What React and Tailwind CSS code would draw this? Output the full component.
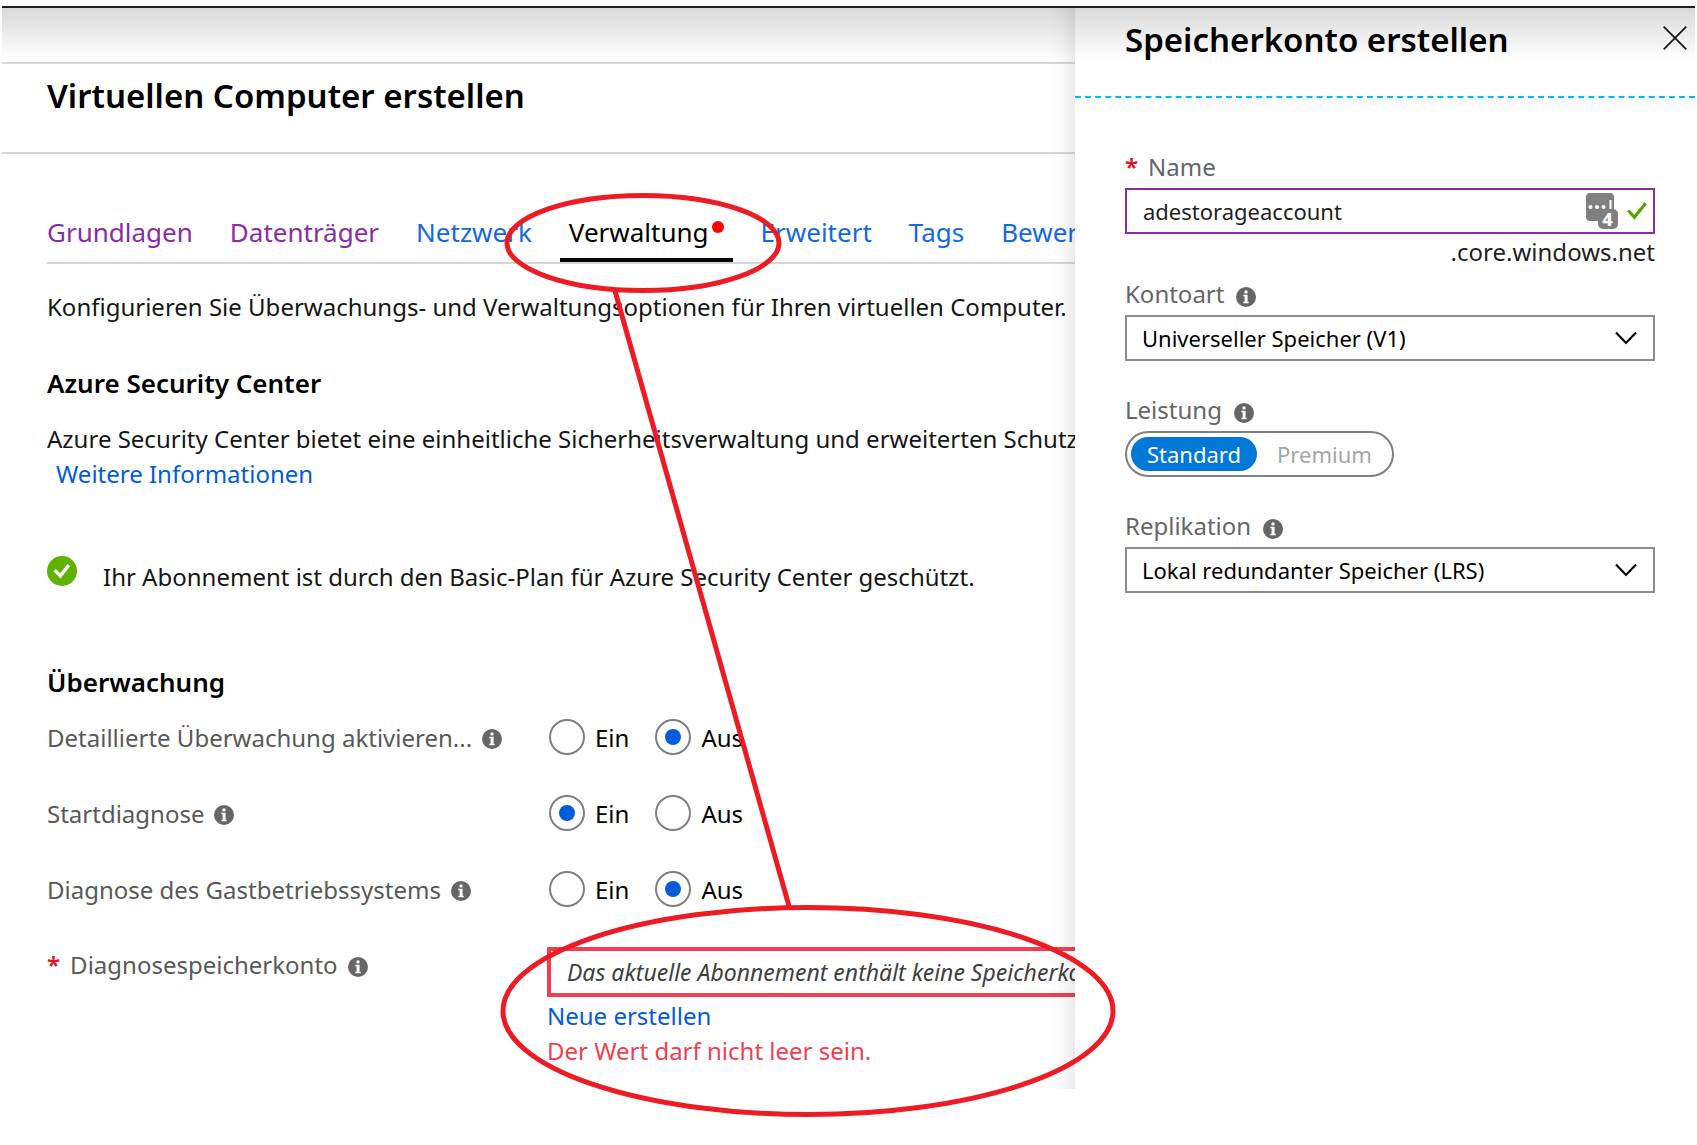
import { useId, useState } from "react";

const BODY = "text-[24px] leading-[35px]";

function InfoIcon() {
  return (
    <svg viewBox="0 0 20 20" className="size-5 shrink-0" aria-hidden="true">
      <circle cx="10" cy="10" r="10" fill="#666" />
      <circle cx="10" cy="4.9" r="1.7" fill="#fff" />
      <path d="M7.3 7.8h4.3v7h1.1v1.5H7.3v-1.5h1.3V9.3H7.3z" fill="#fff" />
    </svg>
  );
}

function Chevron() {
  return (
    <svg viewBox="0 0 22 14" className="pointer-events-none absolute right-[18px] top-4 h-3.5 w-[22px]" aria-hidden="true">
      <path d="M1 1.5 11 12 21 1.5" fill="none" stroke="#000" strokeWidth="2.2" />
    </svg>
  );
}

function Radio({ name, label, checked, onChange }) {
  return (
    <label className="flex items-center gap-2.5 text-black">
      <input
        type="radio"
        name={name}
        checked={checked}
        onChange={onChange}
        className="grid size-9 appearance-none place-items-center rounded-full border-2 border-[#808080] bg-white before:size-4 before:rounded-full checked:before:bg-[#015cda]"
      />
      {label}
    </label>
  );
}

function OptionRow({ label, initial }) {
  const name = useId();
  const [value, setValue] = useState(initial);
  return (
    <fieldset className="flex h-[35px] items-center">
      <div className="flex w-[500px] shrink-0 items-center gap-2.5 text-[#595959]">
        <legend className="contents">{label}</legend>
        <span className="pt-1"><InfoIcon /></span>
      </div>
      <div className="flex gap-[26px] pl-0.5">
        <Radio name={name} label="Ein" checked={value === "Ein"} onChange={() => setValue("Ein")} />
        <Radio name={name} label="Aus" checked={value === "Aus"} onChange={() => setValue("Aus")} />
      </div>
    </fieldset>
  );
}

const TABS = [
  ["Grundlagen", "text-[#8a2da5]"],
  ["Datenträger", "text-[#8a2da5]"],
  ["Netzwerk", "text-[#1569e0]"],
  ["Verwaltung", "text-black"],
  ["Erweitert", "text-[#1569e0]"],
  ["Tags", "text-[#1569e0]"],
  ["Bewertung", "text-[#1569e0]"],
];

function Tabs() {
  return (
    <div role="tablist" className="flex gap-[19px] border-b-2 border-[#d6d6d6]">
      {TABS.map(([label, color], i) => {
        const active = label === "Verwaltung";
        return (
          <button
            key={label}
            role="tab"
            aria-selected={active}
            className={`flex border-b-4 px-[9px] pb-2 text-[26px] leading-9 ${i === 0 ? "pl-0" : ""} ${active ? "border-black" : "border-transparent"} ${color}`}
          >
            {label}
            {active && <span className="mt-[7px] ml-[3px] size-3 rounded-full bg-[#fe0000]" />}
          </button>
        );
      })}
    </div>
  );
}

function CreateVm() {
  return (
    <main className="min-w-0 overflow-hidden whitespace-nowrap pt-[54px] pb-[21px]">
      <header className="border-y-2 border-[#d6d6d6] pt-2.5 pb-[34px] pl-[45px]">
        <h1 className="text-[33px] leading-[44px] font-semibold text-black">Virtuellen Computer erstellen</h1>
      </header>
      <div className={`pt-[60px] pl-[45px] text-[#161616] ${BODY}`}>
        <Tabs />
        <p className="mt-[25px]">Konfigurieren Sie Überwachungs- und Verwaltungsoptionen für Ihren virtuellen Computer.</p>

        <h2 className="mt-[42px] text-[26px] font-semibold text-black">Azure Security Center</h2>
        <p className="mt-5">Azure Security Center bietet eine einheitliche Sicherheitsverwaltung und erweiterten Schutz</p>
        <a href="#info" className="ml-[9px] block w-fit text-[#015cda]">Weitere Informationen</a>

        <div className="mt-[65px] flex items-start gap-[26px]">
          <svg viewBox="0 0 30 30" className="size-[30px]" aria-hidden="true">
            <circle cx="15" cy="15" r="15" fill="#5db300" />
            <path d="m6.5 15.3 2.3-2.3 4.4 4.3 7.3-9.2 2.6 2.1-9.6 12.2z" fill="#fff" />
          </svg>
          <p className="pt-[3px]">Ihr Abonnement ist durch den Basic-Plan für Azure Security Center geschützt.</p>
        </div>

        <h2 className="mt-[71px] text-[26px] font-semibold text-black">Überwachung</h2>
        <form className="mt-[19px] flex flex-col gap-[41px]">
          <OptionRow label="Detaillierte Überwachung aktivieren..." initial="Aus" />
          <OptionRow label="Startdiagnose" initial="Ein" />
          <OptionRow label="Diagnose des Gastbetriebssystems" initial="Aus" />
          <div className="flex items-start">
            <div className="flex w-[500px] shrink-0 items-center gap-2.5 text-[#595959]">
              <label htmlFor="diag">
                <span className="mr-2.5 font-semibold text-[#e81123]">*</span>Diagnosespeicherkonto
              </label>
              <span className="pt-1"><InfoIcon /></span>
            </div>
            <div className="shrink-0">
              <select
                id="diag"
                className="block h-[50px] w-[700px] appearance-none border-4 border-[#f04050] bg-white pl-4 text-[23px] text-[#404040] italic"
              >
                <option>Das aktuelle Abonnement enthält keine Speicherkonten.</option>
              </select>
              <a href="#new" className="mt-px block w-fit text-[#015cda]">Neue erstellen</a>
              <p className="text-[#f04050]">Der Wert darf nicht leer sein.</p>
            </div>
          </div>
        </form>
      </div>
    </main>
  );
}

function PanelLabel({ htmlFor, children, required }) {
  return (
    <div className="flex h-[39px] items-start gap-3 text-[#666]">
      <label htmlFor={htmlFor}>
        {required && <span className="mr-2.5 font-semibold text-[#e81123]">*</span>}
        {children}
      </label>
      {!required && <span className="pt-[11px]"><InfoIcon /></span>}
    </div>
  );
}

function PanelSelect({ id, label, value }) {
  return (
    <div>
      <PanelLabel htmlFor={id}>{label}</PanelLabel>
      <div className="relative">
        <select id={id} className="block h-[46px] w-full appearance-none border-2 border-[#8c8c8c] bg-white pl-[15px] text-[22px] text-black">
          <option>{value}</option>
        </select>
        <Chevron />
      </div>
    </div>
  );
}

function StoragePanel() {
  const [tier, setTier] = useState("Standard");
  return (
    <aside className="relative before:absolute before:inset-y-0 before:-left-[26px] before:w-[26px] before:bg-linear-to-r before:from-transparent before:via-black/2 before:to-black/8">
      <header className="flex items-start justify-between border-b-2 border-dashed border-[#00bcf2] pt-2.5 pr-2 pb-[34px] pl-[50px]">
        <h2 className="text-[33px] leading-[44px] font-semibold text-black">Speicherkonto erstellen</h2>
        <button aria-label="Schließen" className="mt-2">
          <svg viewBox="0 0 24 24" className="size-6" aria-hidden="true">
            <path d="M.7.7l22.6 22.6M23.3.7.7 23.3" stroke="#1a1a1a" strokeWidth="1.8" />
          </svg>
        </button>
      </header>
      <form className={`pt-[51px] pr-10 pl-[50px] ${BODY}`}>
        <PanelLabel htmlFor="name" required>Name</PanelLabel>
        <div className="flex h-[46px] items-center border-2 border-[#8a2da5] pr-1.5 pl-4">
          <input id="name" defaultValue="adestorageaccount" className="min-w-0 flex-1 text-[22px] leading-8 text-[#1f1f1f] outline-none" />
          <svg viewBox="0 0 32 36" className="mr-[9px] h-9 w-8 overflow-visible" aria-hidden="true">
            <rect width="28" height="28" rx="4" fill="#808080" />
            <rect x="12" y="16" width="20" height="20" rx="5" fill="#808080" />
            <circle cx="4.5" cy="14" r="2" fill="#fff" />
            <circle cx="11" cy="14" r="2" fill="#fff" />
            <circle cx="17.5" cy="14" r="2" fill="#fff" />
            <path d="M24.5 7v9" stroke="#fff" strokeWidth="2" />
            <text x="21.5" y="32.5" textAnchor="middle" fontSize="18" fontWeight="800" fill="#fff">4</text>
          </svg>
          <svg viewBox="0 0 20 18" className="h-[18px] w-5" aria-hidden="true">
            <path d="m1.2 8.5 6.3 6.8L18.6 1.2" fill="none" stroke="#57a300" strokeWidth="3.2" />
          </svg>
        </div>
        <p className="text-right text-[#1f1f1f]">.core.windows.net</p>
        <div className="mt-[7px] flex flex-col gap-[31px]">
          <PanelSelect id="kind" label="Kontoart" value="Universeller Speicher (V1)" />
          <div>
            <PanelLabel>Leistung</PanelLabel>
            <div className="flex h-[46px] w-fit items-center gap-1 rounded-full border-2 border-[#808080] px-1 text-[22px]">
              {["Standard", "Premium"].map((t) => (
                <button
                  type="button"
                  key={t}
                  aria-pressed={tier === t}
                  onClick={() => setTier(t)}
                  className={`h-[34px] rounded-full px-4 leading-[34px] ${tier === t ? "bg-[#0078d7] text-white" : "text-[#a6a6a6]"}`}
                >
                  {t}
                </button>
              ))}
            </div>
          </div>
          <PanelSelect id="repl" label="Replikation" value="Lokal redundanter Speicher (LRS)" />
        </div>
      </form>
    </aside>
  );
}

export default function App() {
  return (
    <div className="relative min-h-screen overflow-hidden bg-white px-0.5 pt-1.5 font-['Noto_Sans','Open_Sans',sans-serif]">
      <div className="relative grid grid-cols-[minmax(0,1073fr)_minmax(0,620fr)] border-t-2 border-[#1f1f1f]">
        <CreateVm />
        <StoragePanel />
        <div className="pointer-events-none absolute inset-x-0 top-0 h-[52px] bg-linear-to-b from-black/15 to-transparent" />
      </div>
      <svg viewBox="0 0 1697 1145" className="pointer-events-none absolute top-0 left-0 h-[1145px] w-[1697px]" fill="none" stroke="#ed1c24" strokeWidth="5" aria-hidden="true">
        <ellipse cx="643" cy="243" rx="136" ry="47.5" />
        <path d="M615 291 789 906" />
        <ellipse cx="808" cy="1011" rx="305" ry="103.5" />
      </svg>
    </div>
  );
}
